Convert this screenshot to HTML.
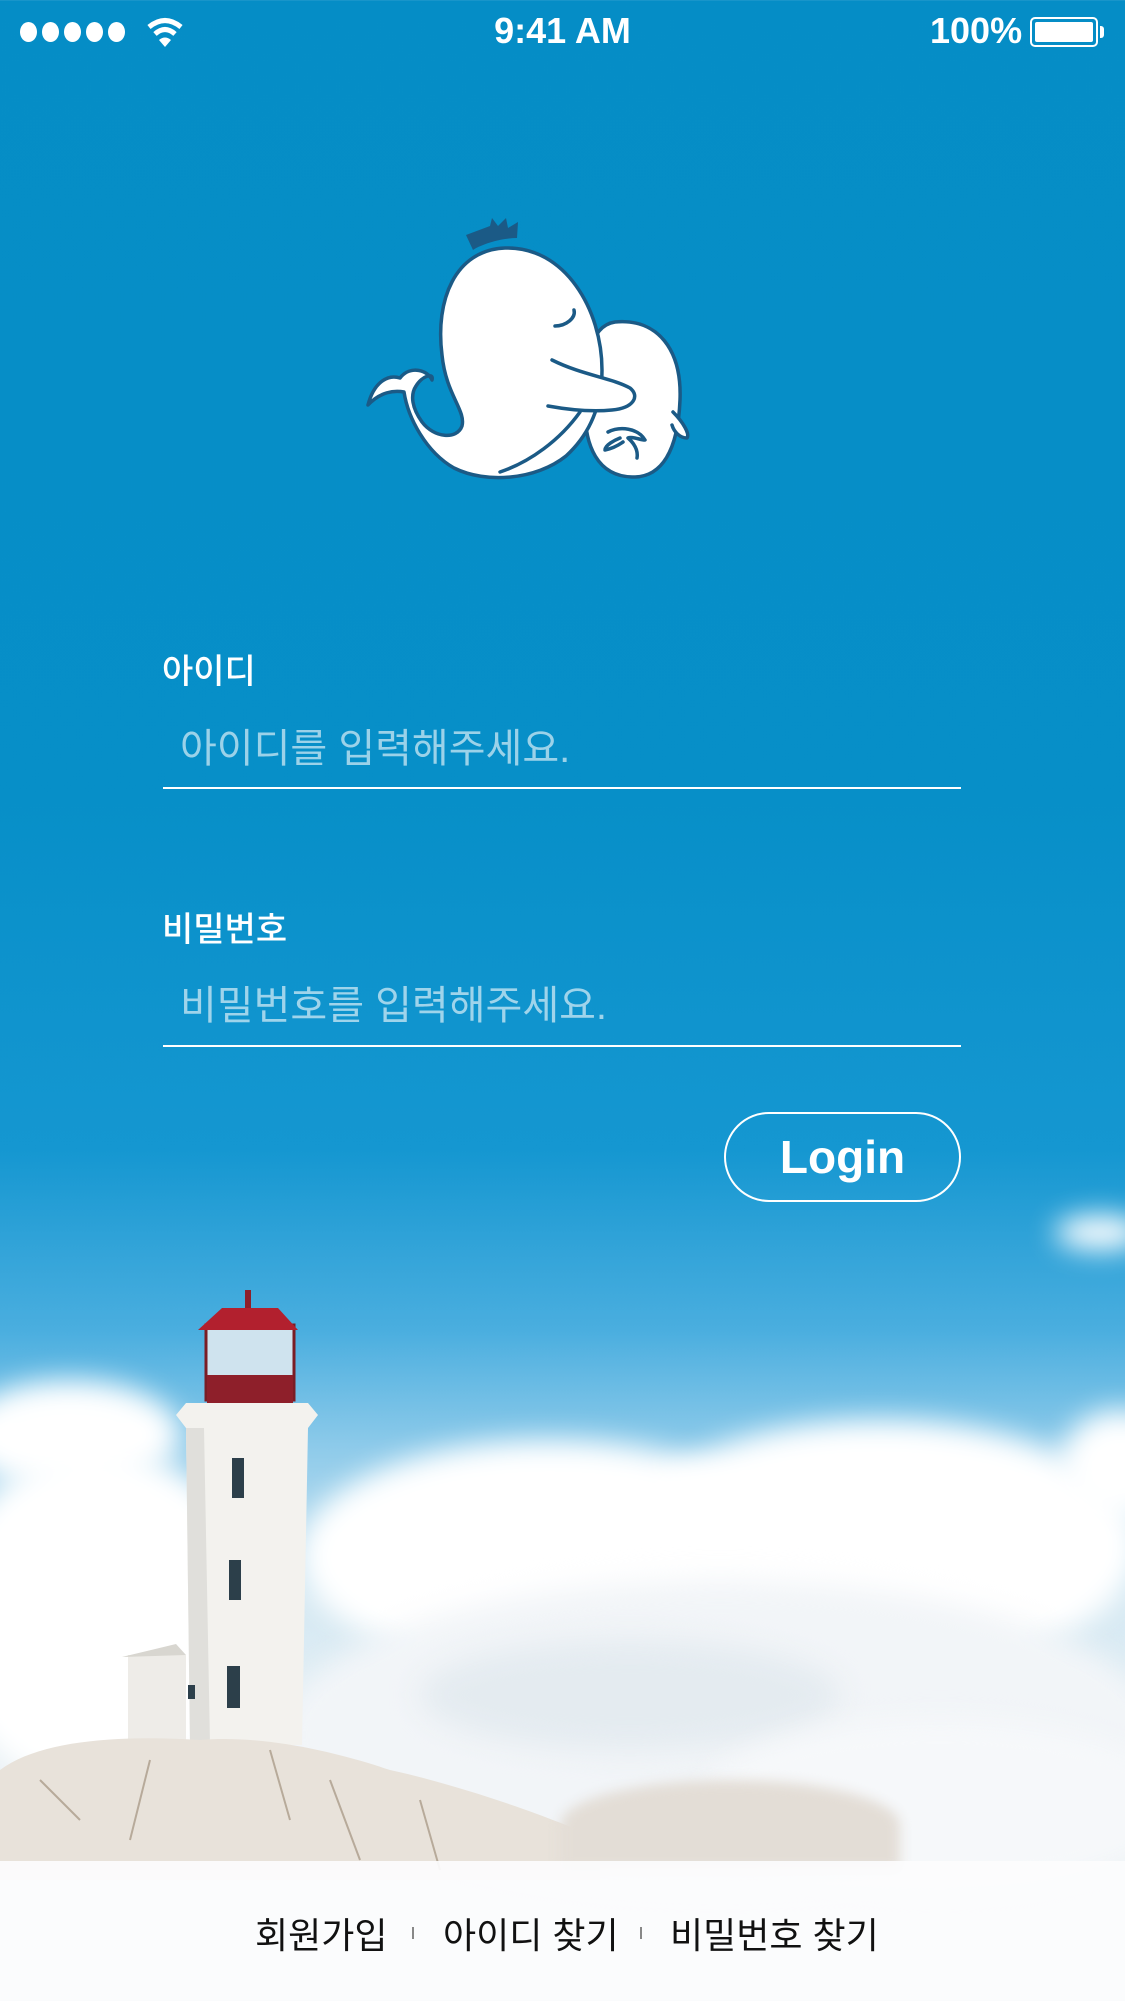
<!DOCTYPE html>
<html><head><meta charset="utf-8"><style>
*{margin:0;padding:0;box-sizing:border-box}
body{width:1125px;height:2001px;overflow:hidden;position:relative;font-family:"Liberation Sans","Noto Sans CJK KR",sans-serif;color:#fff;
background:linear-gradient(180deg,#058dc6 0px,#078fc8 800px,#1597d1 1150px,#4aaedf 1330px,#8fcbea 1450px,#d5e9f3 1600px,#eef3f6 1800px);}
.abs{position:absolute}
.cloud{position:absolute;background:#fff;border-radius:50%;filter:blur(14px)}
.lbl{position:absolute;left:162px;font-size:34px;font-weight:500}
.ph{position:absolute;left:180px;font-size:40px;color:rgba(255,255,255,.6)}
.line{position:absolute;left:163px;width:798px;height:2px;background:#fff}
</style></head><body>
<div class="abs" style="left:20px;top:22px;display:flex;gap:5px">
<div style="width:17px;height:20px;border-radius:50%;background:#fff"></div><div style="width:17px;height:20px;border-radius:50%;background:#fff"></div><div style="width:17px;height:20px;border-radius:50%;background:#fff"></div><div style="width:17px;height:20px;border-radius:50%;background:#fff"></div><div style="width:17px;height:20px;border-radius:50%;background:#fff"></div></div>
<svg class="abs" style="left:145px;top:16px" width="40" height="32" viewBox="0 0 40 32"><path d="M4 11 Q20 -2 36 11" stroke="#fff" stroke-width="5" fill="none"/><path d="M10 18 Q20 9 30 18" stroke="#fff" stroke-width="5" fill="none"/><path d="M14 24 L20 31 L26 24 Q20 19 14 24Z" fill="#fff"/></svg>
<div class="abs" style="left:0;width:1125px;top:10px;text-align:center;font-size:36px;font-weight:bold">9:41 AM</div>
<div class="abs" style="left:930px;top:10px;font-size:36px;font-weight:bold">100%</div>
<div class="abs" style="left:1030px;top:17px;width:68px;height:30px;border:2px solid #fff;border-radius:5px;padding:3px"><div style="background:#fff;width:100%;height:100%;border-radius:2px"></div></div>
<div class="abs" style="left:1100px;top:26px;width:4px;height:12px;background:#fff;border-radius:0 3px 3px 0"></div>

<svg class="abs" style="left:340px;top:200px" width="370" height="300" viewBox="0 0 370 300">
<g stroke="#1b5a86" stroke-width="3.5" fill="#fff" stroke-linejoin="round" stroke-linecap="round">
<path d="M275,122 C318,118 342,150 340,200 C338,250 322,278 292,277 C257,276 245,245 245,210 C245,165 248,126 275,122 Z"/>
<path d="M333,212 C343,222 350,234 347,238 C340,238 334,232 332,225"/>
<path d="M268,232 C280,226 298,228 305,240 C300,240 292,236 288,238 C296,245 298,252 297,258 M280,238 C275,240 265,245 265,250 C275,248 280,244 283,242"/>
<path d="M165,48 C115,50 95,100 102,155 C106,195 126,210 122,226 C117,240 94,238 82,222 C72,208 70,195 76,186 C82,176 94,172 92,180 C88,170 70,165 60,178 C48,174 34,182 28,205 C40,192 54,190 64,192 C68,218 86,252 114,268 C146,284 196,280 226,256 C250,234 262,205 262,170 C262,110 225,46 165,48 Z"/>
<path d="M160,272 C190,262 220,240 240,212"/>
<path d="M212,160 C242,175 272,178 290,188 C300,196 294,208 272,210 C252,212 230,210 208,206"/>
<path d="M215,126 C226,126 236,118 234,110" fill="none"/>
</g>
<path d="M126,35 L150,26 L152,18 L158,26 L166,18 L168,28 L178,22 L177,38 C160,38 140,45 133,50 Z" fill="#1b5a86"/>
</svg>

<div class="lbl" style="top:644px">아이디</div>
<div class="ph" style="top:716px">아이디를 입력해주세요.</div>
<div class="line" style="top:787px"></div>
<div class="lbl" style="top:902px">비밀번호</div>
<div class="ph" style="top:973px">비밀번호를 입력해주세요.</div>
<div class="line" style="top:1045px"></div>
<div class="abs" style="left:724px;top:1112px;width:237px;height:90px;border:2px solid #fff;border-radius:45px;text-align:center;line-height:86px;font-size:46px;font-weight:bold">Login</div>

<div class="cloud" style="left:1055px;top:1215px;width:90px;height:35px"></div>
<div class="cloud" style="left:-40px;top:1380px;width:220px;height:110px"></div>
<div class="cloud" style="left:-60px;top:1450px;width:320px;height:340px"></div>
<div class="cloud" style="left:300px;top:1440px;width:500px;height:230px"></div>
<div class="cloud" style="left:620px;top:1420px;width:520px;height:250px"></div>
<div class="cloud" style="left:1060px;top:1410px;width:120px;height:110px"></div>
<div class="cloud" style="left:280px;top:1580px;width:880px;height:310px;background:#f2f5f8"></div>
<div class="cloud" style="left:420px;top:1640px;width:420px;height:110px;background:#e4ebf0"></div>
<div class="cloud" style="left:700px;top:1720px;width:480px;height:170px;background:#f6f8fa"></div>

<svg class="abs" style="left:0;top:1280px" width="600" height="600" viewBox="0 0 600 600">
<rect x="206" y="45" width="88" height="75" fill="#cfe3ee" stroke="#7a1d25" stroke-width="3"/>
<rect x="207" y="95" width="86" height="28" fill="#8e1f2a"/>
<path d="M198,50 L222,28 L278,28 L298,50 Z" fill="#b2202e"/>
<rect x="245" y="10" width="6" height="18" fill="#8e1f2a"/>
<path d="M176,135 L186,123 L308,123 L318,135 L308,148 L302,465 L190,465 L186,148 Z" fill="#f3f2ee"/>
<path d="M186,148 L190,465 L210,465 L204,148 Z" fill="#e0dfdb"/>
<rect x="232" y="178" width="12" height="40" fill="#2c3f4a"/>
<rect x="229" y="280" width="12" height="40" fill="#2c3f4a"/>
<rect x="227" y="386" width="13" height="42" fill="#2c3f4a"/>
<rect x="128" y="375" width="58" height="90" fill="#eeece8"/>
<path d="M122,377 L176,364 L186,375 Z" fill="#d8d6d0"/>
<rect x="188" y="405" width="7" height="14" fill="#2c3f4a"/>
<path d="M0,490 C40,460 120,455 200,460 C260,455 330,470 390,490 C460,505 560,540 600,560 L600,600 L0,600 Z" fill="#e8e2da"/>
<path d="M40,500 L80,540 M150,480 L130,560 M270,470 L290,540 M330,500 L360,580 M420,520 L440,590" stroke="#b7aa9a" stroke-width="2" fill="none"/>
</svg>
<div class="abs" style="left:560px;top:1780px;width:340px;height:90px;background:#e3ddd6;border-radius:60% 60% 0 0;filter:blur(6px)"></div>

<div class="abs" style="left:0;top:1861px;width:1125px;height:140px;background:rgba(252,252,253,.93)"></div>
<div class="abs" style="left:0;top:1907px;width:1125px;font-size:36px;color:#111;">
<span class="abs" style="left:255px">회원가입</span>
<span class="abs" style="left:412px;top:20px;width:2px;height:12px;background:#888"></span>
<span class="abs" style="left:443px">아이디 찾기</span>
<span class="abs" style="left:640px;top:20px;width:2px;height:12px;background:#888"></span>
<span class="abs" style="left:670px">비밀번호 찾기</span>
</div>
</body></html>
